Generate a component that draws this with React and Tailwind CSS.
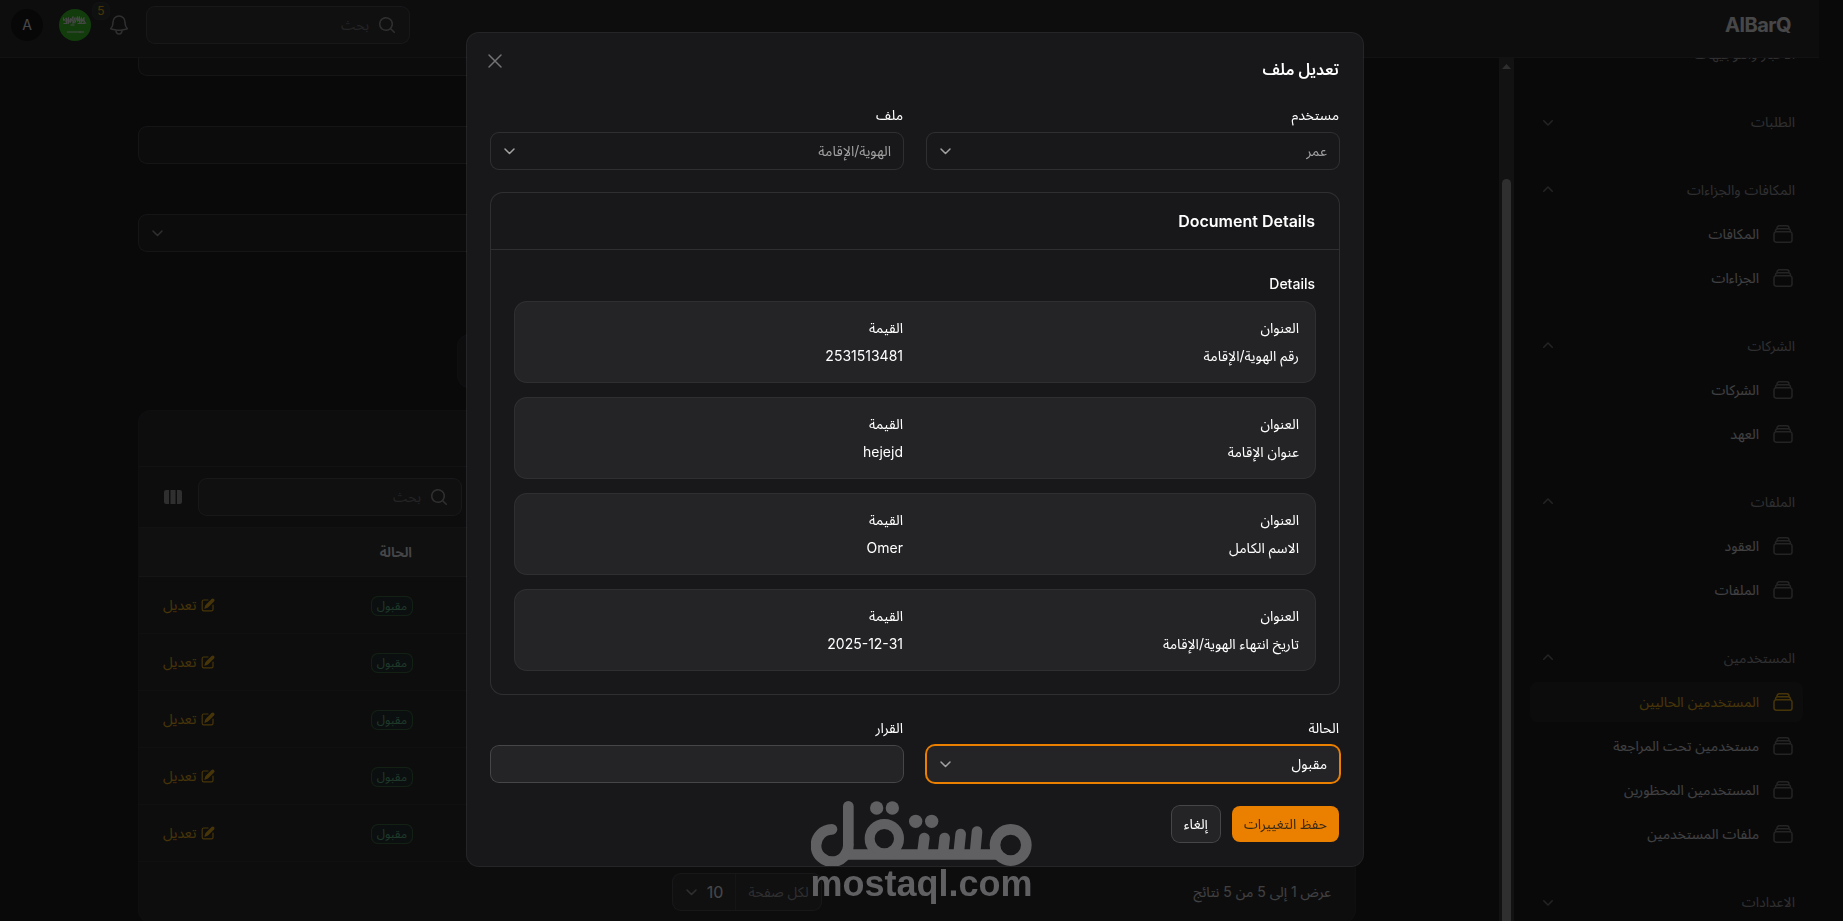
import React from "react";

const FONT = "font-['Inter','Noto_Sans_Arabic','Noto_Sans','DejaVu_Sans',sans-serif]";

function Chevron({ className = "" }) {
  return (
    <svg className={`size-5 ${className}`} viewBox="0 0 20 20" fill="currentColor" aria-hidden="true">
      <path fillRule="evenodd" clipRule="evenodd" d="M5.22 8.22a.75.75 0 0 1 1.06 0L10 11.94l3.72-3.72a.75.75 0 1 1 1.06 1.06l-4.25 4.25a.75.75 0 0 1-1.06 0L5.22 9.28a.75.75 0 0 1 0-1.06Z" />
    </svg>
  );
}

function SelectChevron() {
  return (
    <svg className="pointer-events-none absolute inset-y-2 left-2 size-5 text-neutral-400" viewBox="0 0 20 20" fill="none" stroke="currentColor" strokeWidth="1.5" strokeLinecap="round" strokeLinejoin="round" aria-hidden="true">
      <path d="m6 8 4.500 4.500L15 8" />
    </svg>
  );
}

function Stack() {
  return (
    <svg className="size-6 shrink-0" viewBox="0 0 24 24" fill="none" stroke="currentColor" strokeWidth="1.5" strokeLinecap="round" strokeLinejoin="round" aria-hidden="true">
      <path d="M6 6.878V6a2.25 2.25 0 0 1 2.25-2.25h7.5A2.25 2.25 0 0 1 18 6v.878m-12 0c.235-.083.487-.128.75-.128h10.5c.263 0 .515.045.75.128m-12 0A2.25 2.25 0 0 0 4.5 9v.878m13.5-3A2.25 2.25 0 0 1 19.5 9v.878m0 0a2.246 2.246 0 0 0-.75-.128H5.25c-.263 0-.515.045-.75.128m15 0A2.25 2.25 0 0 1 21 12v6a2.25 2.25 0 0 1-2.25 2.25H5.25A2.25 2.25 0 0 1 3 18v-6c0-.98.626-1.813 1.5-2.122" />
    </svg>
  );
}

function SearchBox({ id }) {
  return (
    <label htmlFor={id} className="flex h-9 w-[262px] items-center gap-2 rounded-lg bg-white/5 px-3 ring-1 ring-white/20">
      <svg className="size-5 shrink-0 text-neutral-400" viewBox="0 0 20 20" fill="currentColor" aria-hidden="true">
        <path fillRule="evenodd" clipRule="evenodd" d="M9 3.5a5.5 5.5 0 1 0 0 11 5.5 5.5 0 0 0 0-11ZM2 9a7 7 0 1 1 12.452 4.391l3.328 3.329a.75.75 0 1 1-1.06 1.06l-3.329-3.328A7 7 0 0 1 2 9Z" />
      </svg>
      <input id={id} type="search" placeholder="بحث" aria-label="بحث" className="w-full min-w-0 bg-transparent text-sm text-white outline-none placeholder:text-neutral-500" />
    </label>
  );
}

const groups = [
  { label: "الاخبار والتوجيهات", items: [] },
  { label: "الطلبات", items: [] },
  { label: "المكافات والجزاءات", items: ["المكافات", "الجزاءات"] },
  { label: "الشركات", items: ["الشركات", "العهد"] },
  { label: "الملفات", items: ["العقود", "الملفات"] },
  { label: "المستخدمين", items: ["المستخدمين الحاليين", "مستخدمين تحت المراجعة", "المستخدمين المحظورين", "ملفات المستخدمين"] },
  { label: "الاعدادات", items: [] },
];

function Sidebar() {
  return (
    <aside className="flex w-80 shrink-0 overflow-hidden">
      <nav className="-mt-6 flex min-w-0 flex-1 flex-col gap-7 px-6">
        {groups.map((g) => (
          <div key={g.label} className="flex flex-col gap-1">
            <button type="button" className="flex h-10 shrink-0 items-center justify-between text-sm text-neutral-400">
              {g.label}
              <Chevron className={g.items.length ? "rotate-180 text-neutral-500" : "text-neutral-500"} />
            </button>
            {g.items.map((item) => {
              const active = item === "المستخدمين الحاليين";
              return (
                <a key={item} href="#" className={active ? "-mx-2 flex h-10 items-center gap-3 rounded-lg bg-white/5 px-2 text-sm text-amber-400" : "-mx-2 flex h-10 items-center gap-3 rounded-lg px-2 text-sm text-neutral-500"}>
                  <Stack />
                  <span className={active ? "" : "text-neutral-200"}>{item}</span>
                </a>
              );
            })}
          </div>
        ))}
      </nav>
      <div className="flex w-[15px] shrink-0 flex-col items-center bg-[#2c2c2c] pt-1.5">
        <svg className="h-[5px] w-[9px] shrink-0 text-[#9f9f9f]" viewBox="0 0 9 5" fill="currentColor" aria-hidden="true"><path d="M4.5 0 9 5H0Z" /></svg>
        <div className="mt-[110px] w-[9px] flex-1 rounded-t-full bg-[#9f9f9f]" />
      </div>
    </aside>
  );
}

function Topbar() {
  return (
    <header className="flex shrink-0 items-center justify-between border-b border-white/10 bg-zinc-900 ps-7 pe-[11px] pt-[7px] pb-[14px]">
      <a href="#" className="text-xl leading-5 font-bold tracking-tight text-white" dir="ltr">AlBarQ</a>
      <div className="flex items-center gap-4">
        <SearchBox id="global-search" />
        <button type="button" aria-label="الإشعارات" className="relative text-neutral-400">
          <svg className="size-6" viewBox="0 0 24 24" fill="none" stroke="currentColor" strokeWidth="1.5" strokeLinecap="round" strokeLinejoin="round" aria-hidden="true">
            <path d="M14.857 17.082a23.848 23.848 0 0 0 5.454-1.31A8.967 8.967 0 0 1 18 9.75V9A6 6 0 0 0 6 9v.75a8.967 8.967 0 0 1-2.312 6.022c1.733.64 3.56 1.085 5.455 1.31m5.714 0a24.255 24.255 0 0 1-5.714 0m5.714 0a3 3 0 1 1-5.714 0" />
          </svg>
          <span className="absolute -top-2.5 -left-3.5 flex size-4 items-center justify-center rounded-md bg-[#232420] text-xs text-amber-400 ring-1 ring-white/10">5</span>
        </button>
        <button type="button" aria-label="العربية" className="size-8 overflow-hidden rounded-full">
          <svg className="size-8" viewBox="0 0 32 32" aria-hidden="true">
            <rect width="32" height="32" fill="#2cd412" />
            <g fill="none" stroke="#fff" strokeWidth="1">
              <path d="M4.500 8.500v3l3-2.500v5l2-5.500v6l2-5v4l2.500-6v7l2-6v5l2.500-6v5l2-5v6l2-5v5l2.500-5v6M4.500 14.500h4m3 1.500h4m3-1.500h8M5 10.500l4 4m3-5 4 5m2-5 4 5m1-5 4 5" />
              <path d="M8 23h17M21 22.300v1.600" />
            </g>
          </svg>
        </button>
        <button type="button" className="size-8 rounded-full bg-black text-sm text-white">A</button>
      </div>
    </header>
  );
}

const rows = [1, 2, 3, 4, 5];

function TableCard() {
  return (
    <section className="mt-6 shrink-0 rounded-xl bg-zinc-900 ring-1 ring-white/10">
      <div className="h-[55px]" />
      <div className="flex items-center justify-end gap-4 border-t border-white/10 px-6 py-3">
        <SearchBox id="table-search" />
        <button type="button" aria-label="الأعمدة" className="text-neutral-400">
          <svg className="size-5" viewBox="0 0 20 20" fill="currentColor" aria-hidden="true">
            <path d="M14 17h2.750A2.250 2.250 0 0 0 19 14.750v-9.500A2.250 2.250 0 0 0 16.750 3H14v14ZM12.500 3h-5v14h5V3ZM3.250 3H6v14H3.250A2.250 2.250 0 0 1 1 14.750v-9.500A2.250 2.250 0 0 1 3.250 3Z" />
          </svg>
        </button>
      </div>
      <table className="w-full text-sm">
        <thead>
          <tr className="h-[49px] border-y border-white/10 bg-white/5 text-white">
            <th aria-hidden="true" />
            <th scope="col" className="w-[150px] px-3 text-start font-semibold">الحالة</th>
            <th scope="col" aria-label="إجراءات" className="w-[135px]" />
          </tr>
        </thead>
        <tbody>
          {rows.map((r) => (
            <tr key={r} className="h-[57px] border-b border-white/5">
              <td />
              <td className="px-3">
                <span className="inline-block rounded-md bg-green-400/5 px-[5px] py-px text-xs leading-4 text-[#5fc98a] ring-1 ring-[#2f6a2f]">مقبول</span>
              </td>
              <td className="pe-6">
                <a href="#" className="flex items-center justify-end gap-1 text-amber-400">
                  <svg className="size-4" viewBox="0 0 20 20" fill="currentColor" aria-hidden="true">
                    <path d="m5.433 13.917 1.262-3.155A4 4 0 0 1 7.580 9.420l6.920-6.918a2.121 2.121 0 0 1 3 3l-6.920 6.918c-.383.383-.840.685-1.343.886l-3.154 1.262a.5.5 0 0 1-.65-.65Z" />
                    <path d="M3.500 5.750c0-.69.56-1.250 1.250-1.250H10A.75.75 0 0 0 10 3H4.750A2.750 2.750 0 0 0 2 5.750v9.500A2.750 2.750 0 0 0 4.750 18h9.500A2.750 2.750 0 0 0 17 15.250V10a.75.75 0 0 0-1.500 0v5.250c0 .69-.56 1.250-1.250 1.250h-9.500c-.69 0-1.250-.56-1.250-1.250v-9.500Z" />
                  </svg>
                  تعديل
                </a>
              </td>
            </tr>
          ))}
        </tbody>
      </table>
      <div className="grid grid-cols-[1fr_auto_1fr] items-center px-6 py-3">
        <p className="text-sm text-neutral-200">عرض 1 إلى 5 من 5 نتائج</p>
        <div className="flex h-9 rounded-lg bg-white/5 text-sm ring-1 ring-white/20">
          <label htmlFor="per-page" className="flex items-center border-e border-white/10 px-3 text-neutral-400">لكل صفحة</label>
          <div className="relative">
            <select id="per-page" className="h-9 w-[62px] appearance-none bg-transparent px-3 text-base text-white outline-none">
              <option>10</option>
            </select>
            <SelectChevron />
          </div>
        </div>
      </div>
    </section>
  );
}

function Page() {
  return (
    <main className="min-w-0 flex-1 overflow-hidden ps-[5px]">
      <div className="mx-auto -mt-[19px] flex max-w-7xl flex-col px-8">
        <input aria-label="الاسم" className="h-9 shrink-0 rounded-lg bg-white/5 ring-1 ring-white/20" />
        <input aria-label="البريد" className="mt-[52px] h-9 shrink-0 rounded-lg bg-white/5 ring-1 ring-white/20" />
        <div className="relative mt-[52px] shrink-0">
          <select aria-label="القسم" className="h-9 w-full appearance-none rounded-lg bg-white/5 px-3 ring-1 ring-white/20" />
          <SelectChevron />
        </div>
        <div className="mx-auto mt-[84px] h-[52px] w-[578px] shrink-0 rounded-xl bg-zinc-900 ring-1 ring-white/10" />
        <TableCard />
      </div>
    </main>
  );
}

function SelectField({ id, label, value, disabled, active }) {
  return (
    <div className="flex flex-col gap-2">
      <label htmlFor={id} className="text-sm text-white">{label}</label>
      <div className="relative">
        <select
          id={id}
          disabled={disabled}
          className={
            active
              ? "h-9 w-full appearance-none rounded-lg bg-white/5 px-3 text-sm text-white ring-2 ring-[#ea7f00] outline-none"
              : "h-9 w-full appearance-none rounded-lg bg-transparent px-3 text-sm text-neutral-400 opacity-100 ring-1 ring-white/10 outline-none"
          }
        >
          <option>{value}</option>
        </select>
        <SelectChevron />
      </div>
    </div>
  );
}

const details = [
  ["رقم الهوية/الإقامة", "2531513481"],
  ["عنوان الإقامة", "hejejd"],
  ["الاسم الكامل", "Omer"],
  ["تاريخ انتهاء الهوية/الإقامة", "2025-12-31"],
];

function Modal() {
  return (
    <div role="dialog" aria-modal="true" aria-labelledby="dialog-title" className="relative flex w-full max-w-4xl flex-col gap-6 rounded-xl bg-zinc-900 p-6 text-white ring-1 ring-white/10">
      <button type="button" aria-label="إغلاق" className="absolute top-4 left-4 text-neutral-500">
        <svg className="size-6" viewBox="0 0 24 24" fill="none" stroke="currentColor" strokeWidth="1.5" strokeLinecap="round" strokeLinejoin="round" aria-hidden="true">
          <path d="M6 18 18 6M6 6l12 12" />
        </svg>
      </button>
      <h2 id="dialog-title" className="text-base leading-6 font-semibold">تعديل ملف</h2>
      <div className="grid grid-cols-2 gap-6">
        <SelectField id="user" label="مستخدم" value="عمر" disabled />
        <SelectField id="file" label="ملف" value="الهوية/الإقامة" disabled />
      </div>
      <section className="rounded-xl ring-1 ring-white/10">
        <h3 className="px-6 py-4 text-base leading-6 font-semibold">Document Details</h3>
        <div className="flex flex-col gap-2 border-t border-white/10 p-6">
          <p className="text-sm font-medium">Details</p>
          <div className="flex flex-col gap-4">
            {details.map(([title, value]) => (
              <dl key={title} className="grid grid-cols-2 gap-6 rounded-xl bg-white/5 p-4 text-sm ring-1 ring-white/10">
                <div className="flex flex-col gap-2">
                  <dt>العنوان</dt>
                  <dd>{title}</dd>
                </div>
                <div className="flex flex-col gap-2">
                  <dt>القيمة</dt>
                  <dd><bdi>{value}</bdi></dd>
                </div>
              </dl>
            ))}
          </div>
        </div>
      </section>
      <div className="grid grid-cols-2 gap-6">
        <SelectField id="status" label="الحالة" value="مقبول" active />
        <div className="flex flex-col gap-2">
          <label htmlFor="decision" className="text-sm text-white">القرار</label>
          <input id="decision" type="text" className="h-9 rounded-lg bg-white/5 px-3 text-sm ring-1 ring-white/20 outline-none" />
        </div>
      </div>
      <div className="flex gap-3 text-sm">
        <button type="button" className="h-9 rounded-lg bg-[#ea7f00] px-3 text-[#3a2a14]">حفظ التغييرات</button>
        <button type="button" className="h-9 rounded-lg bg-white/5 px-3 ring-1 ring-white/20">إلغاء</button>
      </div>
    </div>
  );
}

function Watermark() {
  return (
    <div className="pointer-events-none fixed inset-x-0 bottom-[19px] z-30 flex flex-col items-center text-[#606063]">
      <svg className="h-[65px] w-[221px]" viewBox="513 303 663 195" fill="none" stroke="currentColor" strokeWidth="32" strokeLinecap="round" strokeLinejoin="round" role="img" aria-label="مستقل">
        <circle cx="1112" cy="435" r="47" />
        <path strokeLinecap="butt" d="M606 463.500H1080" />
        <path d="M1011 395 1005 460M962 402 956 460M914 414 909 460M853 414 847 460" />
        <circle cx="733" cy="416" r="44" strokeWidth="30" />
        <path d="M625 319v116a48.500 48.500 0 1 1-49-47" />
        <g fill="currentColor" stroke="none">
          <circle cx="827" cy="364" r="20" />
          <circle cx="875" cy="364" r="20" />
          <circle cx="710" cy="324" r="20" />
          <circle cx="757" cy="324" r="20" />
          <path d="M675 463c6-4 12-10 12-18l20 15ZM791 463c-6-4-12-10-12-18l-20 15Z" />
        </g>
      </svg>
      <span dir="ltr" className="font-['Liberation_Sans',sans-serif] text-4xl leading-9 font-bold">mostaql.com</span>
    </div>
  );
}

export default function App() {
  return (
    <div dir="rtl" className={`h-screen overflow-hidden bg-zinc-950 text-neutral-200 ${FONT}`}>
      <div className="ms-6 flex h-full flex-col">
        <Topbar />
        <div className="flex min-h-0 flex-1">
          <Sidebar />
          <Page />
        </div>
      </div>
      <div className="fixed inset-0 z-20 flex items-start justify-center bg-zinc-950/75 ps-[13px] pt-[33px]">
        <Modal />
      </div>
      <Watermark />
    </div>
  );
}
